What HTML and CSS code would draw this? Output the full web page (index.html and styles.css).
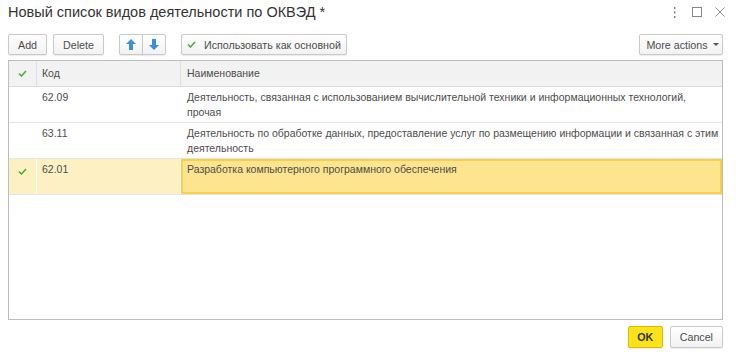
FILE: index.html
```html
<!DOCTYPE html>
<html lang="ru">

<head>
    <meta charset="UTF-8">
    <title>ОКВЭД</title>
    <link rel="stylesheet" href="styles.css">
</head>

<body>
    <div class="window">
        <div class="titlebar">
            <div class="title">Новый список видов деятельности по ОКВЭД *</div>
            <div class="winbtns">
                <span class="wb dots">
                    <svg width="3" height="11" viewBox="0 0 3 11"><rect x="1" y="0" width="1.4" height="2" fill="#777"/><rect x="1" y="4.5" width="1.4" height="2" fill="#777"/><rect x="1" y="9" width="1.4" height="2" fill="#777"/></svg>
                </span>
                <span class="wb">
                    <svg width="10" height="10" viewBox="0 0 10 10"><rect x="0.5" y="0.5" width="9" height="9" fill="none" stroke="#888"/></svg>
                </span>
                <span class="wb">
                    <svg width="10" height="10" viewBox="0 0 10 10"><path d="M0.5 0.5 L9.5 9.5 M9.5 0.5 L0.5 9.5" stroke="#888" stroke-width="1"/></svg>
                </span>
            </div>
        </div>

        <div class="toolbar">
            <button class="btn">Add</button>
            <button class="btn">Delete</button>
            <div class="group">
                <button class="btn arrow">
                    <svg width="10" height="11" viewBox="0 0 10 11"><path d="M5 0 L10 5 L7 5 L7 11 L3 11 L3 5 L0 5 Z" fill="#3b8fd9"/></svg>
                </button>
                <button class="btn arrow">
                    <svg width="10" height="11" viewBox="0 0 10 11"><path d="M5 11 L10 6 L7 6 L7 0 L3 0 L3 6 L0 6 Z" fill="#3b8fd9"/></svg>
                </button>
            </div>
            <button class="btn main">
                <svg class="chk" width="9" height="7" viewBox="0 0 9 7"><path d="M1 3.5 L3.5 6 L8 1" fill="none" stroke="#4caf3c" stroke-width="1.6"/></svg>
                <span>Использовать как основной</span>
            </button>
            <div class="spacer"></div>
            <button class="btn more">More actions <span class="caret"></span></button>
        </div>

        <div class="table">
            <div class="row head">
                <div class="c1">
                    <svg width="9" height="7" viewBox="0 0 9 7"><path d="M1 3.5 L3.5 6 L8 1" fill="none" stroke="#4caf3c" stroke-width="1.6"/></svg>
                </div>
                <div class="c2">Код</div>
                <div class="c3">Наименование</div>
            </div>
            <div class="row">
                <div class="c1"></div>
                <div class="c2">62.09</div>
                <div class="c3">Деятельность, связанная с использованием вычислительной техники и информационных технологий,<br>прочая</div>
            </div>
            <div class="row">
                <div class="c1"></div>
                <div class="c2">63.11</div>
                <div class="c3">Деятельность по обработке данных, предоставление услуг по размещению информации и связанная с этим<br>деятельность</div>
            </div>
            <div class="row selected">
                <div class="c1">
                    <svg width="9" height="7" viewBox="0 0 9 7"><path d="M1 3.5 L3.5 6 L8 1" fill="none" stroke="#4caf3c" stroke-width="1.6"/></svg>
                </div>
                <div class="c2">62.01</div>
                <div class="c3 current">Разработка компьютерного программного обеспечения</div>
            </div>
        </div>

        <div class="footer">
            <button class="btn ok">OK</button>
            <button class="btn">Cancel</button>
        </div>
    </div>
</body>

</html>
```

FILE: styles.css
```css
:root {
    --col1-width: 28px;
    --col2-width: 144px;
}

html {
    height: 100%;
}

body {
    margin: 0;
    height: 100%;
    background-color: #fff;
    font-family: "Liberation Sans", Arial, sans-serif;
    font-size: 10.5px;
    color: #4d4d4d;
}

.window {
    display: flex;
    flex-direction: column;
    height: 100%;
    padding: 0 13px 0 8px;
    box-sizing: border-box;
}

.titlebar {
    display: flex;
    align-items: center;
    height: 24px;
}

.title {
    flex: 1;
    font-size: 14.5px;
    color: #333;
}

.winbtns {
    display: flex;
    align-items: center;
    gap: 13px;
    margin-right: -2px;
}

.wb {
    display: flex;
    width: 10px;
    justify-content: center;
}

.toolbar {
    display: flex;
    align-items: center;
    margin-top: 10px;
    height: 21px;
}

.btn {
    font-family: inherit;
    font-size: 10.7px;
    color: #4d4d4d;
    height: 21px;
    padding: 0 9px;
    white-space: nowrap;
    background: linear-gradient(#fff, #f2f2f2);
    border: 1px solid #c9c9c9;
    border-radius: 2px;
    box-shadow: 0 1px 1px rgba(0, 0, 0, 0.08);
    display: flex;
    align-items: center;
    justify-content: center;
}

.toolbar .btn + .btn {
    margin-left: 6px;
}

.group {
    display: flex;
    margin-left: 15px;
}

.group .arrow {
    width: 24px;
    padding: 0;
    border-radius: 0;
}

.group .arrow:first-child {
    border-radius: 2px 0 0 2px;
}

.group .arrow + .arrow {
    margin-left: -1px;
    border-radius: 0 2px 2px 0;
}

.main {
    margin-left: 15px;
    width: 166px;
}

.main .chk {
    flex-shrink: 0;
    margin-right: 8px;
}

.spacer {
    flex: 1;
}

.more {
    width: 84px;
    padding: 0 6px 0 9px;
}

.caret {
    display: inline-block;
    width: 0;
    height: 0;
    margin-left: 5px;
    border-left: 3px solid transparent;
    border-right: 3px solid transparent;
    border-top: 3px solid #555;
}

.table {
    margin-top: 5px;
    height: 260px;
    border: 1px solid #bdbdbd;
    box-sizing: border-box;
}

.row {
    display: flex;
    min-height: 35px;
    border-bottom: 1px solid #e4e4e4;
    line-height: 15px;
}

.row > div {
    padding: 3px 6px 1px;
    box-sizing: border-box;
}

.row .c1 {
    flex-shrink: 0;
    width: var(--col1-width);
    display: flex;
    justify-content: center;
    padding-top: 9px;
}

.row .c2 {
    flex-shrink: 0;
    width: var(--col2-width);
    padding-left: 5px;
}

.row .c3 {
    flex: 1;
    min-width: 0;
    padding-left: 6px;
    white-space: nowrap;
    overflow: hidden;
}

.head {
    min-height: 25px;
    background-color: #f2f2f2;
    border-bottom: 1px solid #dcdcdc;
}

.head > div {
    padding-top: 5px;
}

.head .c1 {
    padding-top: 9px;
}

.head .c1,
.head .c2 {
    border-right: 1px solid #e0e0e0;
}

.selected {
    background-color: #fdf1c4;
}

.selected .c1,
.selected .c2 {
    border-right: 1px solid #fff;
}

.selected .c3 {
    background-color: #fde48e;
    border: 2px solid #f9cf4a;
    padding-top: 1px;
    padding-left: 4px;
}

.footer {
    display: flex;
    justify-content: flex-end;
    gap: 7px;
    margin-top: 6px;
}

.footer .btn {
    height: 22px;
    padding: 0 9px;
}

.ok {
    width: 35px;
    background: #fce21a;
    border-color: #d9bd00;
    color: #333;
    font-weight: bold;
}
```
